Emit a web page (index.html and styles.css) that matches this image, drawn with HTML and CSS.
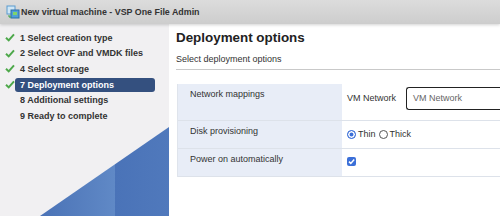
FILE: index.html
```html
<!DOCTYPE html>
<html>
<head>
<meta charset="utf-8">
<link rel="stylesheet" href="styles.css">
</head>
<body>
<div class="window">
  <div class="titlebar">
    <svg class="app-icon" width="14" height="14" viewBox="0 0 14 14">
      <rect x="1" y="1" width="8" height="8" fill="#cfe6f5" stroke="#5a9bd0" stroke-width="1"/>
      <rect x="5" y="5" width="8" height="8" fill="#4f9fd8" stroke="#2d6fa8" stroke-width="1"/>
      <rect x="7" y="7" width="4" height="3" fill="#7fd36a"/>
      <path d="M2 11 L4 11 L4 13" fill="none" stroke="#3fa34d" stroke-width="1.2"/>
    </svg>
    <span class="title">New virtual machine - VSP One File Admin</span>
  </div>
  <div class="content">
    <aside class="sidebar">
      <ul class="steps">
        <li class="step"><span class="check"><svg width="10" height="9" viewBox="0 0 10 9"><path d="M1 4.8 L3.7 7.4 L9 1.4" fill="none" stroke="#4da84a" stroke-width="2"/></svg></span><span class="label">1 Select creation type</span></li>
        <li class="step"><span class="check"><svg width="10" height="9" viewBox="0 0 10 9"><path d="M1 4.8 L3.7 7.4 L9 1.4" fill="none" stroke="#4da84a" stroke-width="2"/></svg></span><span class="label">2 Select OVF and VMDK files</span></li>
        <li class="step"><span class="check"><svg width="10" height="9" viewBox="0 0 10 9"><path d="M1 4.8 L3.7 7.4 L9 1.4" fill="none" stroke="#4da84a" stroke-width="2"/></svg></span><span class="label">4 Select storage</span></li>
        <li class="step"><span class="check"><svg width="10" height="9" viewBox="0 0 10 9"><path d="M1 4.8 L3.7 7.4 L9 1.4" fill="none" stroke="#4da84a" stroke-width="2"/></svg></span><span class="label active">7 Deployment options</span></li>
        <li class="step"><span class="check"></span><span class="label">8 Additional settings</span></li>
        <li class="step"><span class="check"></span><span class="label">9 Ready to complete</span></li>
      </ul>
      <svg class="decor" width="169" height="192" viewBox="0 0 169 192">
        <defs>
          <linearGradient id="g1" x1="0" y1="0" x2="1" y2="0">
            <stop offset="0" stop-color="#4a72b6"/>
            <stop offset="1" stop-color="#6089c6"/>
          </linearGradient>
          <linearGradient id="g2" x1="0" y1="0" x2="1" y2="0">
            <stop offset="0" stop-color="#4a73b8"/>
            <stop offset="1" stop-color="#5079bc"/>
          </linearGradient>
        </defs>
        <polygon points="40,192 115,140.3 115,192" fill="url(#g1)"/>
        <polygon points="115,140.3 169,103 169,192 115,192" fill="url(#g2)"/>
      </svg>
    </aside>
    <main class="main">
      <h1 class="heading">Deployment options</h1>
      <p class="subtitle">Select deployment options</p>
      <div class="table">
        <div class="cell key row1">Network mappings</div>
        <div class="cell val row1">
          <span class="vlabel">VM Network</span>
          <span class="input">VM Network</span>
        </div>
        <div class="cell key">Disk provisioning</div>
        <div class="cell val row2">
          <span class="radio on"></span><span class="rtext">Thin</span>
          <span class="radio second"></span><span class="rtext">Thick</span>
        </div>
        <div class="cell key">Power on automatically</div>
        <div class="cell val row3">
          <span class="checkbox"><svg width="9" height="9" viewBox="0 0 9 9"><path d="M2 4.6 L3.8 6.4 L7.2 2.6" fill="none" stroke="#fff" stroke-width="1.5"/></svg></span>
        </div>
      </div>
    </main>
  </div>
</div>
</body>
</html>
```

FILE: styles.css
```css
* { box-sizing: border-box; }
html, body { margin: 0; padding: 0; }
body {
  width: 500px;
  height: 216px;
  overflow: hidden;
  font-family: "Liberation Sans", Arial, sans-serif;
  color: #333;
  background: #fff;
}
.window { display: flex; flex-direction: column; height: 216px; }
.titlebar {
  height: 24px;
  flex: none;
  display: flex;
  align-items: center;
  padding-left: 6px;
  gap: 1px;
  background: linear-gradient(#dcdcdc, #cdcdcd);
  box-shadow: 0 1px 3px rgba(0,0,0,0.18);
  position: relative;
  z-index: 2;
}
.app-icon { display: block; }
.title {
  font-weight: bold;
  font-size: 8.9px;
  color: #333;
}
.content { flex: 1; display: flex; min-height: 0; }
.sidebar {
  width: 169px;
  flex: none;
  background: #f1f0f2;
  position: relative;
}
.steps {
  list-style: none;
  margin: 0;
  padding: 6px 0 0 5px;
  position: relative;
  z-index: 1;
}
.step {
  height: 15.6px;
  display: flex;
  align-items: center;
}
.check { width: 10px; height: 9px; flex: none; display: flex; }
.check svg { display: block; }
.label {
  font-weight: bold;
  font-size: 9px;
  color: #333;
  padding: 0 5px;
  height: 14px;
  line-height: 14px;
  width: 140px;
  border-radius: 3px;
  white-space: nowrap;
}
.label.active {
  background: #34507f;
  color: #fff;
}
.decor { position: absolute; left: 0; bottom: 0; display: block; }
.main {
  flex: 1;
  padding-left: 7px;
  min-width: 0;
}
.heading {
  margin: 6px 0 0;
  font-size: 13.4px;
  line-height: 16px;
  font-weight: bold;
  color: #222;
}
.subtitle {
  margin: 7px 0 0;
  font-size: 9px;
  line-height: 12px;
  color: #333;
  padding-bottom: 4px;
  border-bottom: 1px solid #c9c9c9;
}
.table {
  margin-top: 14px;
  margin-left: 1px;
  display: grid;
  grid-template-columns: 164px 1fr;
  grid-template-rows: 37px 28px 28px;
  border-left: 1px solid #dfe4ec;
}
.cell {
  border-bottom: 1px solid #dde2ea;
  font-size: 9px;
  line-height: 12px;
}
.key {
  background: #e8edf7;
  padding: 4px 0 0 12px;
  color: #333;
}
.val {
  padding-left: 5px;
  display: flex;
  align-items: center;
  align-self: stretch;
}
.val.row1 { padding-top: 3px; align-items: flex-start; }
.vlabel { line-height: 23px; color: #333; }
.input {
  margin-left: 10px;
  height: 23px;
  flex: 1;
  border: 1.5px solid #222;
  border-right: none;
  border-radius: 3px 0 0 3px;
  padding-left: 6px;
  line-height: 20px;
  color: #666;
}
.val.row2 { align-items: flex-start; padding-top: 7px; }
.radio {
  width: 9px;
  height: 9px;
  border-radius: 50%;
  border: 1px solid #555;
  flex: none;
  margin-top: 1.5px;
}
.radio.on {
  border-color: #3b6fd8;
  background: #3b6fd8;
  box-shadow: inset 0 0 0 1.5px #fff;
}
.radio.second { margin-left: 3px; }
.rtext { margin-left: 2px; color: #333; }
.val.row3 { align-items: flex-start; padding-top: 8px; }
.checkbox {
  width: 9px;
  height: 9px;
  background: #3b6fd8;
  border-radius: 2px;
  display: flex;
}
.checkbox svg { display: block; }
```
